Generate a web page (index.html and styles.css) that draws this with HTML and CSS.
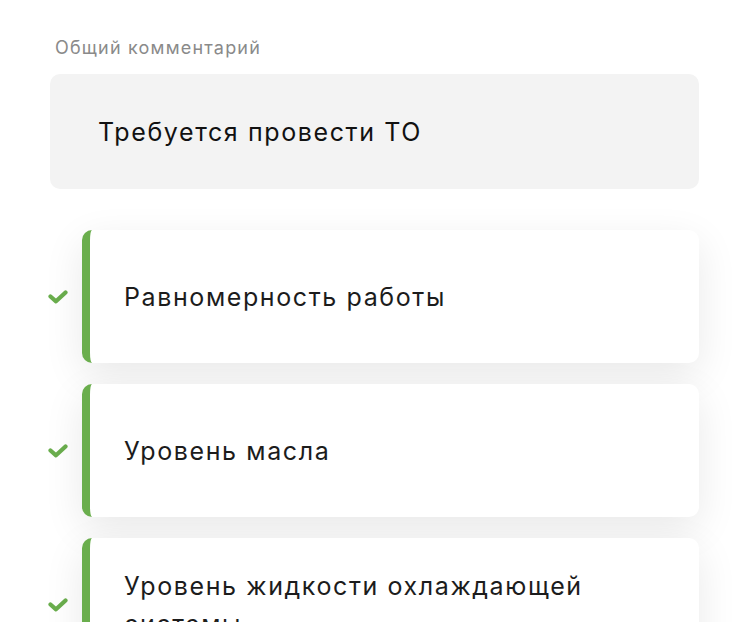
FILE: index.html
```html
<!DOCTYPE html>
<html lang="ru">
<head>
<meta charset="utf-8">
<link rel="stylesheet" href="styles.css">
</head>
<body>
<div class="page">
  <div class="label">Общий комментарий</div>
  <div class="comment">Требуется провести ТО</div>
  <div class="list">
    <div class="item">
      <div class="mark"><svg width="20" height="14" viewBox="0 0 20 14"><path d="M2.5 6.5 L8 11.3 L17.5 2.5" fill="none" stroke="#6aae4d" stroke-width="4.2" stroke-linecap="round" stroke-linejoin="round"/></svg></div>
      <div class="card">Равномерность работы</div>
    </div>
    <div class="item">
      <div class="mark"><svg width="20" height="14" viewBox="0 0 20 14"><path d="M2.5 6.5 L8 11.3 L17.5 2.5" fill="none" stroke="#6aae4d" stroke-width="4.2" stroke-linecap="round" stroke-linejoin="round"/></svg></div>
      <div class="card">Уровень масла</div>
    </div>
    <div class="item">
      <div class="mark"><svg width="20" height="14" viewBox="0 0 20 14"><path d="M2.5 6.5 L8 11.3 L17.5 2.5" fill="none" stroke="#6aae4d" stroke-width="4.2" stroke-linecap="round" stroke-linejoin="round"/></svg></div>
      <div class="card">Уровень жидкости охлаждающей системы</div>
    </div>
  </div>
</div>
</body>
</html>
```
FILE: styles.css
```css
html, body {
  margin: 0;
  padding: 0;
  background: #ffffff;
  overflow: hidden;
}
body {
  font-family: Inter, "Noto Sans", sans-serif;
  color: #1c1c1c;
}
.page {
  width: 649px;
  margin-left: 50px;
  padding-top: 36px;
}
.label {
  padding-left: 5px;
  font-size: 18px;
  line-height: 24px;
  color: #8a8a8a;
  letter-spacing: 1.2px;
}
.comment {
  margin-top: 14px;
  height: 115px;
  box-sizing: border-box;
  background: #f3f3f3;
  border-radius: 10px;
  padding-left: 48px;
  display: flex;
  align-items: center;
  font-size: 25px;
  letter-spacing: 1.6px;
  color: #111;
}
.list {
  margin-top: 41px;
  display: flex;
  flex-direction: column;
  gap: 21px;
}
.item {
  display: flex;
  align-items: center;
}
.mark {
  flex: 0 0 32px;
  display: flex;
  align-items: center;
}
.mark svg {
  display: block;
  margin-left: -2px;
}
.card {
  flex: 1;
  min-height: 133px;
  box-sizing: border-box;
  background: #fff;
  border-left: 8px solid #6aae4d;
  border-radius: 10px;
  box-shadow: 0 12px 40px rgba(0, 0, 0, 0.09);
  padding: 28px 40px 28px 34px;
  display: flex;
  align-items: center;
  font-size: 25px;
  letter-spacing: 1.6px;
  line-height: 38px;
  color: #1c1c1c;
}
```
